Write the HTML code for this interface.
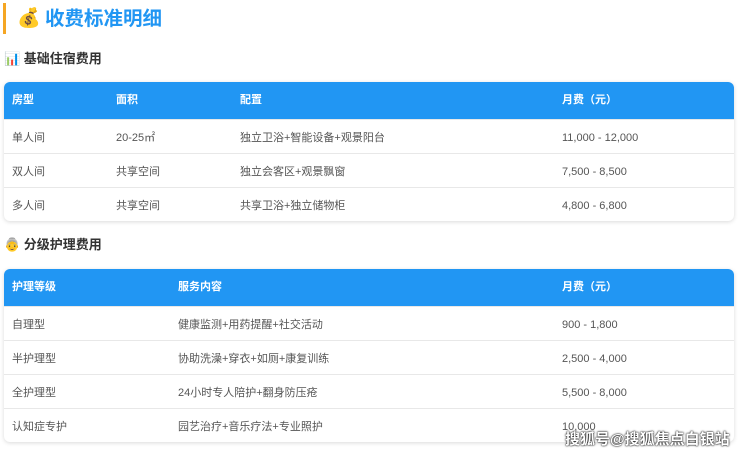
<!DOCTYPE html>
<html><head><meta charset="utf-8"><style>
*{margin:0;padding:0;box-sizing:border-box}
body{width:740px;height:454px;background:#fff;font-family:"Liberation Sans","Noto Sans CJK SC",sans-serif;position:relative;overflow:hidden;color:#555}
.bar{position:absolute;left:3px;top:3px;width:3px;height:31px;background:#f5a623}
.emo{position:absolute;left:17px;top:6px;font-size:19px;line-height:26px}
.title{position:absolute;left:45px;top:5px;font-size:19.5px;font-weight:bold;color:#2196F3;line-height:28px}
.h2{position:absolute;left:4px;font-size:13px;font-weight:bold;color:#333;line-height:18px}
.tbl{position:absolute;left:4px;width:730px;border-radius:6px;overflow:hidden;box-shadow:0 1px 4px rgba(0,0,0,.15);background:#fff}
.hd{height:37px;background:#2196F3;color:#fff;font-weight:bold;font-size:11px;position:relative}
.r{height:34px;border-top:1px solid #e8e8e8;font-size:11px;position:relative}
.c{position:absolute;top:1px;line-height:34px;white-space:nowrap}
.hd .c{line-height:37px;top:0}
.wm{position:absolute;left:565px;top:428px;font-size:15px;color:#fff;font-weight:bold;text-shadow:0 0 2px #000,0 0 1px #000;letter-spacing:0}
</style></head><body>
<div class="bar"></div>
<div class="emo">💰</div>
<div class="title">收费标准明细</div>
<div class="h2" style="top:50px">📊 基础住宿费用</div>
<div class="tbl" style="top:82px">
<div class="hd"><span class="c" style="left:8px">房型</span><span class="c" style="left:112px">面积</span><span class="c" style="left:236px">配置</span><span class="c" style="left:558px">月费（元）</span></div>
<div class="r"><span class="c" style="left:8px">单人间</span><span class="c" style="left:112px">20-25㎡</span><span class="c" style="left:236px">独立卫浴+智能设备+观景阳台</span><span class="c" style="left:558px">11,000 - 12,000</span></div>
<div class="r"><span class="c" style="left:8px">双人间</span><span class="c" style="left:112px">共享空间</span><span class="c" style="left:236px">独立会客区+观景飘窗</span><span class="c" style="left:558px">7,500 - 8,500</span></div>
<div class="r"><span class="c" style="left:8px">多人间</span><span class="c" style="left:112px">共享空间</span><span class="c" style="left:236px">共享卫浴+独立储物柜</span><span class="c" style="left:558px">4,800 - 6,800</span></div>
</div>
<div class="h2" style="top:236px">👵 分级护理费用</div>
<div class="tbl" style="top:269px">
<div class="hd"><span class="c" style="left:8px">护理等级</span><span class="c" style="left:174px">服务内容</span><span class="c" style="left:558px">月费（元）</span></div>
<div class="r"><span class="c" style="left:8px">自理型</span><span class="c" style="left:174px">健康监测+用药提醒+社交活动</span><span class="c" style="left:558px">900 - 1,800</span></div>
<div class="r"><span class="c" style="left:8px">半护理型</span><span class="c" style="left:174px">协助洗澡+穿衣+如厕+康复训练</span><span class="c" style="left:558px">2,500 - 4,000</span></div>
<div class="r"><span class="c" style="left:8px">全护理型</span><span class="c" style="left:174px">24小时专人陪护+翻身防压疮</span><span class="c" style="left:558px">5,500 - 8,000</span></div>
<div class="r"><span class="c" style="left:8px">认知症专护</span><span class="c" style="left:174px">园艺治疗+音乐疗法+专业照护</span><span class="c" style="left:558px">10,000</span></div>
</div>
<div class="wm">搜狐号@搜狐焦点白银站</div>
</body></html>
